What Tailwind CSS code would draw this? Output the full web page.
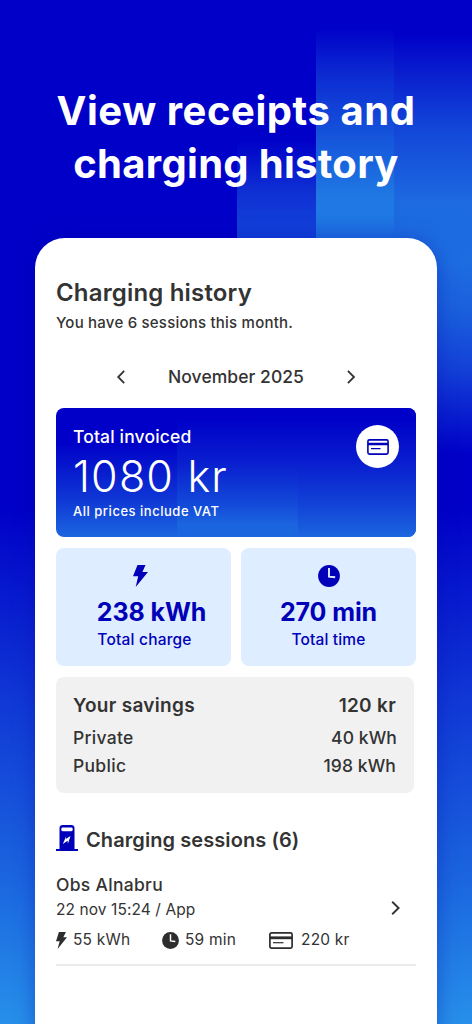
<!DOCTYPE html>
<html lang="en">
<head>
  <meta charset="UTF-8" />
  <meta name="viewport" content="width=device-width, initial-scale=1.0" />
  <title>Charging history</title>
  <script src="https://cdn.jsdelivr.net/npm/@tailwindcss/browser@4"></script>
</head>

<body class="relative h-[1024px] w-[472px] overflow-hidden bg-[#0000c8] font-['Inter',sans-serif] text-[#333333]">

  <!-- Background gradient and light bars -->
  <div class="absolute inset-0 bg-[linear-gradient(to_bottom,#0000c8_0px,#0000c8_505px,#1038d5_700px,#1b66df_880px,#2790ea_1024px)]"></div>
  <div class="absolute left-[237px] top-0 h-[300px] w-[79px] bg-[linear-gradient(to_bottom,transparent_140px,#0e2fd3_190px,#123fd8_225px)]"></div>
  <div class="absolute left-[316px] top-0 h-[300px] w-[78px] bg-[linear-gradient(to_bottom,transparent_28px,#0c2bd2_75px,#1450da_130px,#1f78e3_195px,#1f78e3_215px,#1b68df_245px)]"></div>
  <div class="absolute left-[394px] top-0 h-[520px] w-[78px] bg-[linear-gradient(to_bottom,transparent_34px,#0a20cf_75px,#1347d8_130px,#1c69e0_200px,#1d6de1_260px,#1a60dd_310px,#1340d7_370px,transparent_455px)]"></div>

  <main class="relative">
    <h1 class="pt-[84px] text-center text-[40px] leading-[53px] font-bold text-white">
      <span class="tracking-[0.55px]">View receipts and</span><br />
      <span class="tracking-[0.3px]">charging history</span>
    </h1>

    <!-- Phone sheet -->
    <section class="mx-[35px] mt-[48px] h-[820px] rounded-t-[30px] bg-white pl-[21px] pr-[21px] pt-[39px] shadow-[0_2px_22px_rgba(0,0,160,0.35)]">
      <h2 class="text-2xl leading-8 font-semibold tracking-[0.17px]">Charging history</h2>
      <p class="mt-[2px] text-[15px] leading-6 font-[450] tracking-[0.22px]">You have 6 sessions this month.</p>

      <!-- Month picker -->
      <div class="mt-[30px] flex h-6 items-center justify-between pl-[60px] pr-[60px]">
        <svg class="h-[14px] w-[9px]" viewBox="0 0 9 14" fill="none" stroke="#333" stroke-width="1.8"><path d="M8.2 .8 2.2 7l6 6.2" /></svg>
        <span class="text-[17.5px] leading-6 font-[450] tracking-[0.05px]">November 2025</span>
        <svg class="h-[14px] w-[9px]" viewBox="0 0 9 14" fill="none" stroke="#333" stroke-width="1.8"><path d="M.9 .8 7 7 .9 13.2" /></svg>
      </div>

      <!-- Invoice total -->
      <div class="relative mt-[19px] flex h-[129px] justify-between overflow-hidden rounded-lg bg-[linear-gradient(to_bottom,#0000c8_0%,#0000c8_27%,#0e33d4_68%,#1b66df_100%)] pl-[17px] pr-[17px] text-white">
        <div class="absolute left-[121px] top-0 h-full w-[121px] bg-[linear-gradient(to_bottom,#0000c8_8%,#091ecf_42%,#134ad9_75%,#1b64df_90%,#1b66df_100%)]"></div>
        <div class="absolute left-[242px] top-0 h-full w-[118px] bg-[linear-gradient(to_bottom,#0000c8_8%,#091ecf_42%,#1243d7_75%,#1b66df_100%)]"></div>
        <div class="relative pt-[17px]">
          <p class="text-[17.5px] leading-6 font-[450] tracking-[0.15px]">Total invoiced</p>
          <p class="text-[43px] leading-[54px] font-light tracking-[1.2px]">1080 kr</p>
          <p class="-mt-px text-[13px] leading-[18px] font-[450] tracking-[0.52px]">All prices include VAT</p>
        </div>
        <div class="relative mt-[17px] flex size-[43px] items-center justify-center rounded-full bg-white">
          <svg class="h-[16px] w-[22px]" viewBox="0 0 22 16" fill="none" stroke="#0000b8" stroke-width="1.6"><rect x=".9" y=".9" width="20.2" height="14.2" rx="1.6" /><path d="M1 5h20" stroke-width="2.4" /><path d="M4 9.7h9.5" stroke-width="1.2" /></svg>
        </div>
      </div>

      <!-- Totals -->
      <div class="mt-[11px] grid grid-cols-2 gap-[10px] text-center text-[#0000b8]">
        <div class="flex h-[118px] flex-col items-center rounded-lg bg-[#deedff] pt-[17px]">
          <svg class="mr-[6px] h-[22px] w-[15px]" viewBox="0 0 15 22" fill="#0000b8"><path d="M4.5 0h8L9.4 6.9H15L2.7 22 5.2 11.3H0z" /></svg>
          <p class="ml-4 mt-[9px] text-[25px] leading-8 font-bold tracking-[-0.1px]">238 kWh</p>
          <p class="ml-[2px] text-[15.5px] leading-[24px] font-[450] tracking-[0.2px]">Total charge</p>
        </div>
        <div class="flex h-[118px] flex-col items-center rounded-lg bg-[#deedff] pt-[17px]">
          <svg class="h-[22px] w-[22px]" viewBox="0 0 22 22"><circle cx="11" cy="11" r="10.9" fill="#0000b8" /><path d="M11 3v8.6l6.2.7" fill="none" stroke="#deedff" stroke-width="1.9" /></svg>
          <p class="mt-[9px] text-[25px] leading-8 font-bold tracking-[-0.1px]">270 min</p>
          <p class="text-[15.5px] leading-[24px] font-[450] tracking-[0.15px]">Total time</p>
        </div>
      </div>

      <!-- Savings -->
      <div class="mt-[11px] mr-[2px] h-[116px] rounded-lg bg-[#f1f1f1] pl-[17px] pr-[17px] pt-[15px]">
        <div class="flex justify-between text-[19px] leading-7 font-semibold tracking-[0.3px]"><span>Your savings</span><span class="pr-px">120 kr</span></div>
        <div class="mt-[4px] flex justify-between text-[17.5px] leading-7 font-[450] tracking-[0.3px]"><span>Private</span><span class="tracking-[0.1px]">40 kWh</span></div>
        <div class="flex justify-between text-[17.5px] leading-7 font-[450] tracking-[0.3px]"><span>Public</span><span class="pr-px tracking-[0.1px]">198 kWh</span></div>
      </div>

      <!-- Sessions -->
      <div class="mt-[32px] flex items-start">
        <svg class="h-[26px] w-[22px]" viewBox="0 0 22 26"><path d="M3.5 24V3.2Q3.5 0 6.7 0h8.6q3.2 0 3.2 3.2V24H22v2H0v-2z" fill="#0000b8" /><rect x="5.3" y="2.6" width="11.4" height="3.6" rx="1.4" fill="#fff" /><path d="M10.2 11.2 9.8 14l4.7-3-2.6 7.8-.3-3-4.8 3.3z" fill="#fff" /></svg>
        <h3 class="ml-2 pt-px text-[20px] leading-7 font-semibold tracking-[0.08px]">Charging sessions (6)</h3>
      </div>
      <div class="mt-[19px] flex items-center justify-between pr-[16px]">
        <div>
          <p class="text-[17.5px] leading-6 font-[450] tracking-[0.3px]">Obs Alnabru</p>
          <p class="mt-px text-[15.5px] leading-6 tracking-[0.08px]">22 nov 15:24 / App</p>
        </div>
        <svg class="mt-[20px] h-[14px] w-[9px]" viewBox="0 0 9 14" fill="none" stroke="#333" stroke-width="1.9"><path d="M1.2 .8 7.6 7l-6.4 6.2" /></svg>
      </div>
      <div class="mt-[6px] flex h-6 items-center text-[15.5px] leading-6 tracking-[0.2px]">
        <svg class="h-[17px] w-[11px]" viewBox="0 0 15 22" preserveAspectRatio="none" fill="#2d2d2d"><path d="M4 0h9.5L10 6.9H15L2.2 22 5 12H0z" /></svg>
        <span class="ml-[6px] w-[89px]">55 kWh</span>
        <svg class="h-[17px] w-[17px]" viewBox="0 0 22 22"><circle cx="11" cy="11" r="10.9" fill="#2d2d2d" /><path d="M11 3v8.6l6.2.7" fill="none" stroke="#fff" stroke-width="1.9" /></svg>
        <span class="ml-[6px] w-[84px]">59 min</span>
        <svg class="h-[17px] w-[24px]" viewBox="0 0 24 17" fill="none" stroke="#2d2d2d" stroke-width="1.7"><rect x=".9" y=".9" width="22.2" height="15.2" rx="1.6" /><path d="M1 5.8h22" stroke-width="2.8" /><path d="M4 10.7h10.5" stroke-width="1.2" /></svg>
        <span class="ml-[8px]">220 kr</span>
      </div>
      <hr class="mt-[12px] border-t-2 border-[#ebebeb]" />
    </section>
  </main>

</body>
</html>
